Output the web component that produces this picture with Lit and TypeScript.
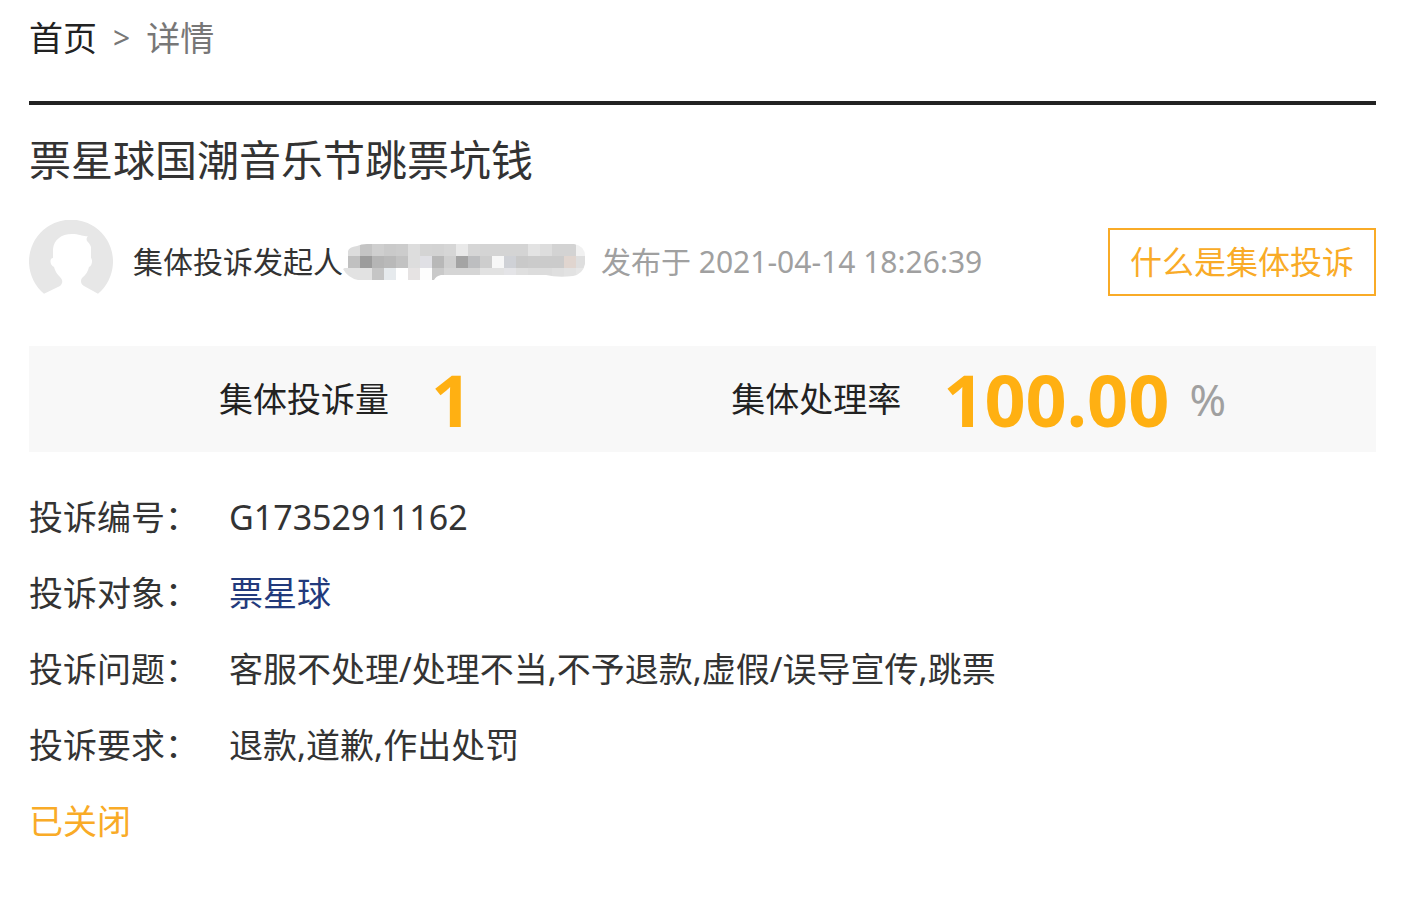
import { LitElement, html, svg, css } from "lit";
import { customElement } from "lit/decorators.js";

const TILE = 12;

// Rows of grey blocks that hide the author's name.
const MASK_ROWS: string[][] = [
  ["#dcdcdc", "#c4c4c4", "#cfcfcf", "#cacaca", "#cccccc", "#dddddd", "#d4d4d4", "#d3d3d3", "#d6d6d6", "#e9e9e9", "#d6d6d6", "#d4d4d4", "#d4d4d4", "#d4d4d4", "#d4d4d4", "#e3e3e3", "#dddddd", "#d3d3d3", "#d3d3d3", "#f1f1f1"],
  ["#c0c0c0", "#9c9c9c", "#b5b5b5", "#b9b9b9", "#c2c2c2", "#dddddd", "#e0e0e5", "#b8b8b8", "#cfcfcf", "#a4a4a4", "#bdbec0", "#cdcdcd", "#f7f7f7", "#cfd1d6", "#c9c9c9", "#cbcbcb", "#cbcbcb", "#cbcbcb", "#e0d5cf", "#dedede"],
  ["#e2e2e2", "#e2e2e2", "#c5c5c5", "#e6eaed", "#ffffff", "#e6e3e3", "#fdfdfd", "#c9c9c9", "#d5d5d5", "#d5d5d5", "#d5d5d5", "#e2e2e2", "#e2e2e2", "#e4e4e7", "#dfdfdf", "#dcdcdc", "#dcdcdc", "#dfdfdf", "#e2e2e2", "#e6e6e6"],
];

@customElement("app-root")
export class AppRoot extends LitElement {
  static styles = css`
    :host {
      display: block;
      font-family: "Noto Sans", "Noto Sans CJK SC", sans-serif;
      font-size: 34px;
      line-height: 50px;
      color: #333;
      background: #fff;
    }
    .page {
      padding: 13px 48px 0 29px;
    }
    a {
      text-decoration: none;
    }
    .crumbs {
      display: flex;
      gap: 16px;
      padding-bottom: 38px;
      border-bottom: 4px solid #222;
      color: #777;
    }
    .crumbs a {
      color: #222;
    }
    .crumbs .sep {
      font-size: 30px;
    }
    h1 {
      margin: 24px 0 0;
      font-size: 42px;
      font-weight: 400;
      line-height: 62px;
    }
    .meta {
      display: flex;
      align-items: center;
      margin-top: 29px;
      font-size: 30px;
    }
    .avatar {
      width: 84px;
      height: 84px;
      margin-right: 20px;
    }
    .mask {
      width: 242px;
      height: 36px;
    }
    .time {
      margin-left: 16px;
      color: #a0a0a0;
    }
    button {
      margin-left: auto;
      padding: 6px 20px;
      font: inherit;
      font-size: 32px;
      line-height: 52px;
      color: #f9ab27;
      background: #fff;
      border: 2px solid #f9ab27;
      cursor: pointer;
    }
    .stats {
      display: grid;
      grid-template-columns: 47% 47%;
      margin-top: 42px;
      background: #f8f8f8;
      color: #222;
    }
    .stat {
      display: flex;
      align-items: center;
      justify-content: center;
      height: 106px;
    }
    .num {
      margin-left: 42px;
      font-size: 72px;
      font-weight: 700;
      color: #ffb012;
    }
    .unit {
      margin-left: 20px;
      font-size: 44px;
      color: #a0a0a0;
    }
    dl {
      display: grid;
      grid-template-columns: max-content 1fr;
      gap: 26px 30px;
      margin: 40px 0 0;
    }
    dd {
      margin: 0;
    }
    dd a {
      color: #223a7c;
    }
    .status {
      margin: 26px 0;
      color: #f9ab27;
    }
  `;

  private details = [
    ["投诉编号：", "G17352911162"],
    ["投诉对象：", html`<a href="#">票星球</a>`],
    ["投诉问题：", "客服不处理/处理不当,不予退款,虚假/误导宣传,跳票"],
    ["投诉要求：", "退款,道歉,作出处罚"],
  ];

  private renderAvatar() {
    return html`<svg class="avatar" viewBox="0 0 84 84" aria-hidden="true">
      <path
        fill="#e7e7e7"
        d="M15 73.8A42 42 0 1 1 69 73.8L55 66C52 64 51 61 53 58C57 55 59 51 60 47C63 46 64 40 62 38V27C61 24 59 22 58 21C57 19 58 17 59 16C54 17 51 14 43 14C32 14 25 20 24 29V38C20 38 21 46 25 47C26 51 28 54 31 57C34 60 34 63 31 66Z"
      />
    </svg>`;
  }

  private renderMask() {
    return html`<svg class="mask" viewBox="0 0 242 36" aria-hidden="true">
      <defs>
        <clipPath id="blot">
          <path d="M5 7Q6 3 14 2Q18 0 24 0H231Q242 2 242 12V20Q240 30 230 32Q215 34 203 31H98Q93 32 91 36H38L15 36Q5 34 0 25L5 22Z" />
        </clipPath>
      </defs>
      <g clip-path="url(#blot)" shape-rendering="crispEdges">
        <rect x="0" y="24" width="5" height="12" fill="#e2e2e2" />
        ${MASK_ROWS.map((row, y) =>
          row.map(
            (fill, x) =>
              svg`<rect x=${5 + x * TILE} y=${y * TILE} width=${TILE} height=${TILE} fill=${fill} />`
          )
        )}
      </g>
    </svg>`;
  }

  render() {
    return html`<main class="page">
      <nav class="crumbs">
        <a href="#">首页</a><span class="sep">&gt;</span><span>详情</span>
      </nav>
      <h1>票星球国潮音乐节跳票坑钱</h1>
      <div class="meta">
        ${this.renderAvatar()}
        <span>集体投诉发起人</span>
        ${this.renderMask()}
        <span class="time">发布于 2021-04-14 18:26:39</span>
        <button type="button">什么是集体投诉</button>
      </div>
      <section class="stats">
        <div class="stat"><span>集体投诉量</span><span class="num">1</span></div>
        <div class="stat">
          <span>集体处理率</span><span class="num">100.00</span><span class="unit">%</span>
        </div>
      </section>
      <dl>
        ${this.details.map(([label, value]) => html`<dt>${label}</dt><dd>${value}</dd>`)}
      </dl>
      <p class="status">已关闭</p>
    </main>`;
  }
}
